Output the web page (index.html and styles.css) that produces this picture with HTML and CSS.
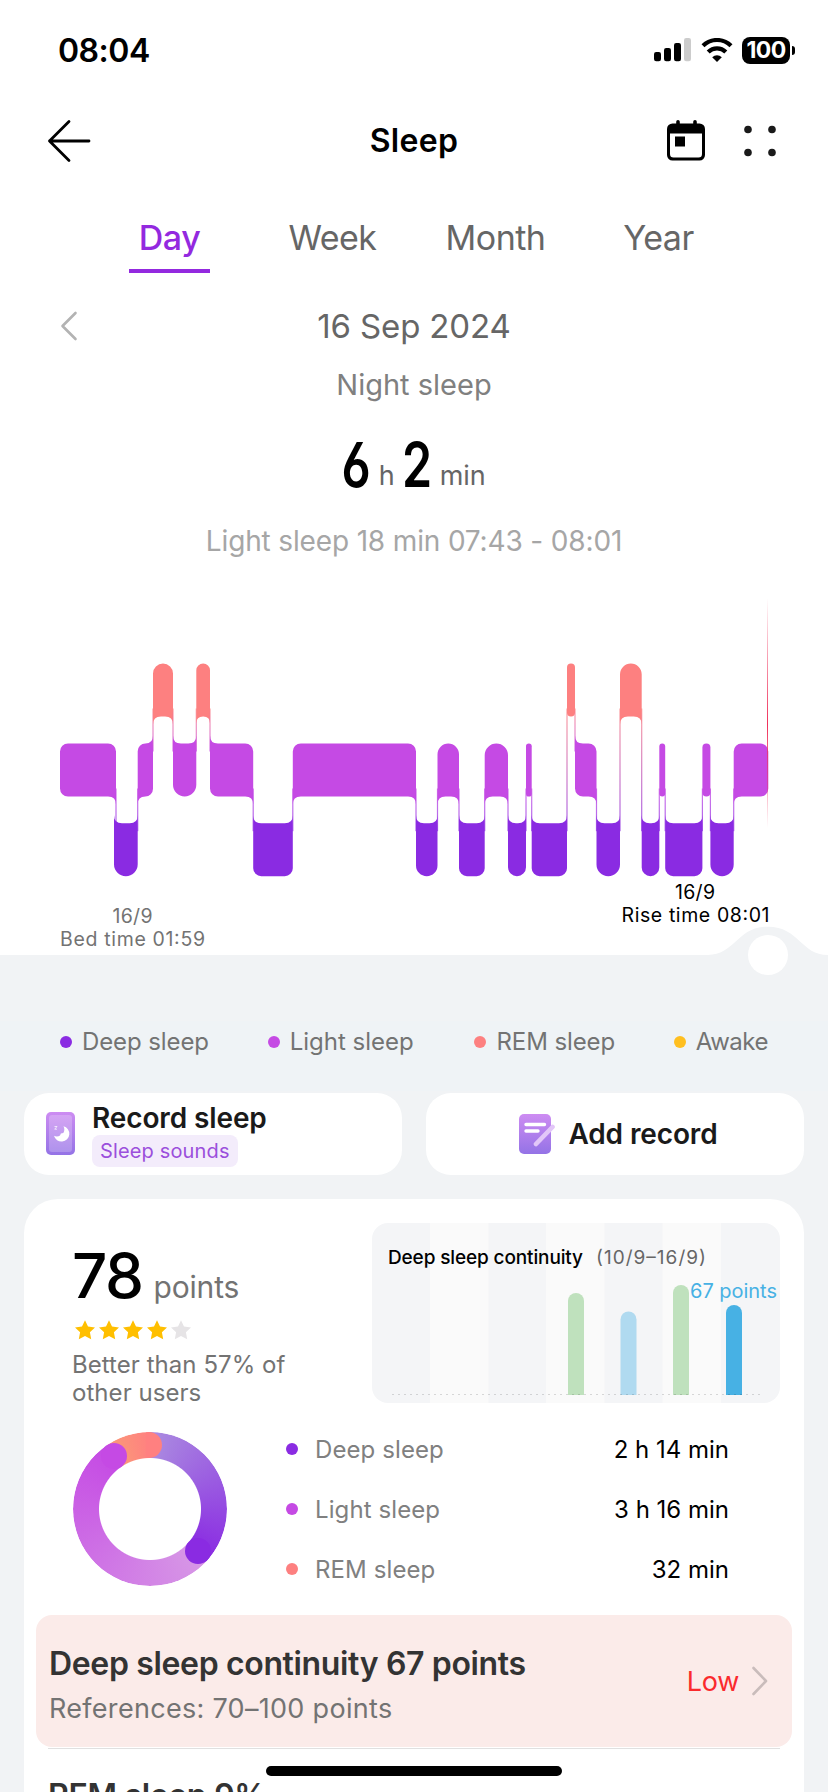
FILE: index.html
```html
<!DOCTYPE html>
<html lang="en">
<head>
<meta charset="utf-8">
<title>Sleep</title>
<link rel="stylesheet" href="styles.css">
</head>
<body>
<div class="screen">
  <header class="status">
    <span class="clock">08:04</span>
    <div class="indicators">
      <svg class="signal" width="38" height="24" viewBox="0 0 38 24">
        <rect x="0" y="14" width="7" height="9.3" rx="2.2"/><rect x="10" y="10" width="7" height="13.3" rx="2.2"/>
        <rect x="20" y="5" width="7" height="18.3" rx="2.2"/><rect x="30" y="0" width="7" height="23.3" rx="2.2" fill="#ccc"/>
      </svg>
      <svg class="wifi" width="32" height="24" viewBox="0 0 32 24">
        <path d="M2 7.8a19.8 19.8 0 0 1 28 0" fill="none" stroke="#000" stroke-width="4.2"/>
        <path d="M7.2 13.9a12.5 12.5 0 0 1 17.6 0" fill="none" stroke="#000" stroke-width="4.2"/>
        <path d="M11.2 19.2a7 7 0 0 1 9.6 0L16 24z"/>
      </svg>
      <div class="battery">100</div><i class="battery-cap"></i>
    </div>
  </header>

  <nav class="nav">
    <svg class="back" width="44" height="44" viewBox="0 0 44 44" fill="none" stroke="#000" stroke-width="2.8" stroke-linecap="round" stroke-linejoin="round"><path d="M22 2.500 2.500 22 22 41.500M2.500 22h39.500"/></svg>
    <h1 class="title">Sleep</h1>
    <div class="actions">
      <svg width="38" height="42" viewBox="0 0 38 42"><path d="M0 9a5.500 5.500 0 0 1 5.500-5.500h27A5.500 5.500 0 0 1 38 9v26a5.500 5.500 0 0 1-5.500 5.500h-27A5.500 5.500 0 0 1 0 35zM3 13.500V34a3.500 3.500 0 0 0 3.500 3.500h25A3.500 3.500 0 0 0 35 34V13.500z" fill-rule="evenodd"/><path d="M11 1.800V6M28 1.800V6" stroke="#000" stroke-width="3.600" stroke-linecap="round"/><rect x="8" y="16.500" width="10" height="10"/></svg>
      <svg width="32" height="32" viewBox="0 0 32 32" fill="#1a1a1a"><circle cx="4" cy="4.500" r="3.800"/><circle cx="28" cy="4.500" r="3.800"/><circle cx="4" cy="27.500" r="3.800"/><circle cx="28" cy="27.500" r="3.800"/></svg>
    </div>
  </nav>

  <div class="tabs">
    <span class="tab active">Day</span><span class="tab">Week</span><span class="tab">Month</span><span class="tab">Year</span>
  </div>

  <div class="date-row">
    <svg width="18" height="30" viewBox="0 0 18 30" fill="none" stroke="#b3b3b3" stroke-width="2.600" stroke-linecap="round" stroke-linejoin="round"><path d="M15.500 2 2.500 15l13 13"/></svg>
    <span class="date">16 Sep 2024</span>
  </div>
  <p class="kind">Night sleep</p>
  <p class="duration"><b class="num">6</b><span class="unit">h</span><b class="num">2</b><span class="unit">min</span></p>
  <p class="detail">Light sleep 18 min 07:43 - 08:01</p>

  <svg class="stages" width="828" height="460" viewBox="0 561 828 460">
    <path class="track" d="M0 955H708C735 955 737 926.700 768 926.700S801 955 828 955V1021H0Z"/>
    <circle cx="768" cy="955" r="20" fill="#fff"/>
    <defs>
      <linearGradient id="cursor" x1="0" y1="0" x2="0" y2="1"><stop offset="0" stop-color="#f0305a" stop-opacity="0"/><stop offset=".55" stop-color="#f0305a"/><stop offset="1" stop-color="#f0305a" stop-opacity="0"/></linearGradient>
    </defs>
    <g id="plot"></g>
    <rect x="767" y="598" width="1" height="230" fill="url(#cursor)"/>
    <g class="axis" text-anchor="middle">
      <text x="132.500" y="922.700" textLength="40">16/9</text>
      <text x="132.500" y="945.700" textLength="145">Bed time 01:59</text>
      <text class="strong" x="695" y="899" textLength="40">16/9</text>
      <text class="strong" x="695.500" y="922" textLength="148">Rise time 08:01</text>
    </g>
  </svg>

  <div class="legend">
    <span class="key deep">Deep sleep</span><span class="key light">Light sleep</span><span class="key rem">REM sleep</span><span class="key awake">Awake</span>
  </div>

  <div class="buttons">
    <div class="button">
      <svg class="phone" width="29" height="43" viewBox="0 0 29 43"><defs><linearGradient id="pg" x1="0" y1="0" x2="0" y2="1"><stop offset="0" stop-color="#cd8cf2"/><stop offset="1" stop-color="#9473e6"/></linearGradient></defs><rect width="29" height="43" rx="5" fill="url(#pg)"/><rect x="3" y="3" width="23" height="37" rx="3" fill="#fff" opacity=".22"/><path d="M17.500 14.200a7.800 7.800 0 1 1-9.500 9.600c2 1 4.500.8 6-.3l.9-2 2.400-.4c1.300-2 1.400-4.800.2-6.900z" fill="#fff"/><path d="M8.500 14.500l2.500 0-2.300 2.700h2.300" fill="none" stroke="#fff" stroke-opacity=".7"/></svg>
      <div class="record"><strong>Record sleep</strong><span class="tag">Sleep sounds</span></div>
    </div>
    <div class="button center">
      <svg width="36" height="41" viewBox="0 0 36 41"><rect width="32" height="40" rx="5" fill="url(#pg)"/><path d="M7 10.500h18.500M7 17h12" stroke="#fff" stroke-width="3.400" stroke-linecap="round"/><path d="M33.500 13 17 30" stroke="#e2c6f8" stroke-width="4.600" stroke-linecap="round"/></svg>
      <strong>Add record</strong>
    </div>
  </div>

  <section class="card">
    <div class="summary">
      <div class="score">
        <p class="points"><span class="big">78</span><span class="pt">points</span></p>
        <div class="stars" id="stars"></div>
        <p class="rank">Better than 57% of<br>other users</p>
      </div>
      <svg class="trend" width="408" height="180" viewBox="372 1223 408 180">
        <g fill="#fafafa"><rect x="430" y="1223" width="58.500" height="180"/><rect x="546" y="1223" width="58.500" height="180"/><rect x="662.500" y="1223" width="58.500" height="180"/></g>
        <g><path d="M568 1395v-94a8 8 0 0 1 16 0v94z" fill="#bfe1bd"/><path d="M620.500 1395v-75.500a8 8 0 0 1 16 0v75.500z" fill="#b0daf0"/><path d="M673 1395v-102a8 8 0 0 1 16 0v102z" fill="#bfe1bd"/><path d="M726 1395v-82a8 8 0 0 1 16 0v82z" fill="#47b1e4"/></g>
        <path d="M392 1394.500H760" stroke="#000" stroke-opacity=".14" stroke-dasharray="2 4"/>
        <text class="t1" x="388" y="1264" textLength="195">Deep sleep continuity</text>
        <text class="t2" x="596" y="1263.500" textLength="110">(10/9–16/9)</text>
        <text class="t3" x="690" y="1298" textLength="87">67 points</text>
      </svg>
    </div>
    <div class="breakdown">
      <div class="donut"><div class="ring"></div><i class="cap c1"></i><i class="cap c2"></i><i class="cap c3"></i></div>
      <div class="rows">
        <div class="row"><span class="key deep">Deep sleep</span><span>2 h 14 min</span></div>
        <div class="row"><span class="key light">Light sleep</span><span>3 h 16 min</span></div>
        <div class="row"><span class="key rem">REM sleep</span><span>32 min</span></div>
      </div>
    </div>
    <div class="alert">
      <div><h2 class="metric">Deep sleep continuity 67 points</h2><p class="refs">References: 70–100 points</p></div>
      <div class="level">Low<svg width="16" height="30" viewBox="0 0 16 30" fill="none" stroke="#c9bcbb" stroke-width="2.600" stroke-linecap="round" stroke-linejoin="round"><path d="m1.500 2 12.500 13L1.500 28"/></svg></div>
    </div>
    <div class="next"><h2 class="metric">REM sleep 9%</h2></div>
  </section>
  <div class="home"></div>
</div>
<script src="chart.js"></script>
</body>
</html>
```
FILE: styles.css
```css
* { box-sizing: border-box; margin: 0; padding: 0; }
body { background: #f1f3f5; font-family: Inter, "Liberation Sans", sans-serif; color: #000; }
.screen { position: relative; width: 828px; height: 1792px; overflow: hidden; background: linear-gradient(#fff 955px, #f1f3f5 955px); }
svg { display: block; flex: none; }

.status { height: 100px; padding: 0 33px 0 58px; display: flex; align-items: center; justify-content: space-between; }
.clock { font-size: 32px; font-weight: 600; letter-spacing: -.5px; }
.indicators { display: flex; align-items: center; }
.wifi { margin-left: 9px; }
.battery { margin-left: 9px; width: 48px; height: 27px; border-radius: 8px; background: #000; color: #fff; font-size: 23px; font-weight: 700; line-height: 27px; text-align: center; letter-spacing: -.6px; }
.battery-cap { width: 3px; height: 9px; margin-left: 2px; border-radius: 0 3px 3px 0; background: #000; }

.nav { height: 82px; padding: 0 52px; display: grid; grid-template-columns: 1fr auto 1fr; align-items: center; }
.back { margin-left: -5px; }
.title { font-size: 32px; font-weight: 600; letter-spacing: .3px; line-height: 38px; }
.actions { display: flex; justify-content: flex-end; align-items: center; gap: 39px; }

.tabs { height: 91px; padding: 26px 88px 0; display: grid; grid-template-columns: repeat(4, 163px); }
.tab { justify-self: center; width: 163px; text-align: center; line-height: 60px; font-size: 34px; letter-spacing: -.5px; color: #666; }
.tab.active { width: 81px; height: 65px; color: #9329df; border-bottom: 4px solid #9329df; font-weight: 500; }

.date-row { position: relative; margin-top: 23px; height: 60px; padding-left: 60px; display: flex; align-items: center; }
.date { flex: 1; padding-right: 78px; text-align: center; font-size: 33px; letter-spacing: -.15px; color: #666; }
.kind { margin-top: 9px; line-height: 40px; text-align: center; font-size: 29px; color: #808080; }
.duration { margin-top: 20px; height: 80px; line-height: 80px; display: flex; justify-content: center; }
.num { width: 28px; font-size: 62px; font-weight: 600; font-feature-settings: "cv03"; transform: scaleX(.78); display: flex; justify-content: center; }
.unit { font-size: 27px; color: #666; line-height: 101px; margin: 0 8.5px; }
.unit:last-child { margin-right: 0; }
.detail { margin-top: 16px; line-height: 40px; text-align: center; font-size: 28px; letter-spacing: -.15px; color: #a6a6a6; }

.track { fill: #f1f3f5; }
.axis { font-size: 19.5px; fill: #737373; }
.axis .strong { fill: #000; }

.legend { height: 70px; padding: 6px 60px 0 60px; background: #eff3f6; display: flex; align-items: flex-start; justify-content: space-between; font-size: 24px; line-height: 30px; color: #737373; }
.key { display: flex; align-items: center; gap: 10px; }
.key::before { content: ""; width: 12px; height: 12px; border-radius: 50%; background: currentColor; }
.key.deep::before { background: #8a2be2; }
.key.light::before { background: #c54ae4; }
.key.rem::before { background: #fd8080; }
.key.awake::before { background: #ffbf20; }
.legend .deep { letter-spacing: -.1px; }
.legend .rem { letter-spacing: -.1px; margin-left: 2px; }
.legend .awake { letter-spacing: -.5px; }

.buttons { margin: 2px 24px 0; display: grid; grid-template-columns: 1fr 1fr; gap: 24px; }
.button { height: 82px; border-radius: 25px; background: #fff; display: flex; align-items: center; padding: 0 22px; gap: 17px; font-size: 28px; color: #1a1a1a; }
.button.center { justify-content: center; gap: 13px; padding: 0 15px 0 22px; }
.button strong { font-weight: 600; line-height: 34px; letter-spacing: -.12px; }
.phone { margin-top: -1px; }
.record { display: flex; flex-direction: column; align-items: flex-start; }
.tag { padding: 0 8px; border-radius: 8px; background: #f3ecfb; color: #9b4fdc; font-size: 20px; line-height: 32px; letter-spacing: .15px; }

.card { margin: 24px 24px 0; height: 700px; border-radius: 34px; background: #fff; padding: 24px 12px 0; }
.summary { height: 180px; display: flex; justify-content: space-between; padding: 0 12px 0 36px; }
.points { margin-top: 18px; height: 70px; display: flex; align-items: baseline; line-height: 70px; }
.big { font-size: 62px; font-weight: 500; letter-spacing: -1.5px; }
.pt { margin-left: 11px; font-size: 30px; letter-spacing: -.2px; color: #737373; }
.stars { display: flex; gap: 4px; margin: 9px 0 0 3px; height: 20px; }
.rank { margin-top: 11px; font-size: 24px; line-height: 28px; letter-spacing: .05px; color: #737373; }
.trend { border-radius: 16px; background: #f4f5f7; }
.t1 { font-size: 19px; font-weight: 500; fill: #000; }
.t2 { font-size: 19px; fill: #666; }
.t3 { font-size: 20px; fill: #47b1e4; }

.breakdown { margin-top: 16px; height: 196px; display: flex; padding: 0 63px 0 37px; }
.donut { position: relative; margin-top: 13px; width: 154px; height: 154px; }
.ring { width: 154px; height: 154px; border-radius: 50%; background: conic-gradient(#ab8ce0, #8a2be2 131deg, #8a2be2 133deg, #d798e6 133deg, #c54ae4 326deg, #fa9a78 327deg, #ff8080 360deg); -webkit-mask: radial-gradient(circle, transparent 50.5px, #000 51.5px); mask: radial-gradient(circle, transparent 50.5px, #000 51.5px); }
.cap { position: absolute; width: 26px; height: 26px; border-radius: 50%; }
.c1 { left: 112.300px; top: 105.700px; background: #8a2be2; }
.c2 { left: 28px; top: 11px; background: #c54ae4; }
.c3 { left: 62.700px; top: 0; background: linear-gradient(90deg, transparent 40%, #ff8080 40%); }
.rows { flex: 1; margin-left: 59px; }
.row { height: 60px; display: flex; align-items: center; justify-content: space-between; font-size: 24px; }
.row .key { color: #808080; gap: 17px; letter-spacing: .1px; }

.alert { height: 132px; border-radius: 16px; background: #fbebe9; padding: 27px 24px 0 13px; display: flex; justify-content: space-between; }
.metric { font-size: 32px; line-height: 44px; font-weight: 600; letter-spacing: -.35px; color: #333; }
.refs { font-size: 27px; line-height: 46px; letter-spacing: .3px; color: #737373; }
.level { height: 78px; display: flex; align-items: center; gap: 13px; font-size: 27px; letter-spacing: -.3px; color: #fa2a2d; }
.next { margin: 1px 12px 0; border-top: 1px solid #e0e0e0; padding-top: 25px; }
.home { position: absolute; left: 266px; top: 1766px; width: 296px; height: 10px; border-radius: 5px; background: #000; }
```
FILE: chart.js
```js
const levels = {
  R: { y: 663.5, color: '#fd8080' },
  L: { y: 743.5, color: '#c54ae4' },
  D: { y: 823.2, color: '#8a2be2' }
};
const H = 53;
// [stage, start, end] along the night
const night = [
  ['L', 60, 116], ['D', 114, 137.7], ['L', 137.7, 153], ['R', 153, 173], ['L', 173, 196.3], ['R', 196.3, 210],
  ['L', 210, 253.2], ['D', 253.2, 292.8], ['L', 292.8, 416], ['D', 416, 437.5], ['L', 437.5, 459], ['D', 459, 484.7],
  ['L', 484.7, 508], ['D', 508, 526], ['L', 526, 531.7], ['D', 531.7, 567], ['R', 567, 575], ['L', 575, 596.5],
  ['D', 596.5, 620], ['R', 620, 641.7], ['D', 641.7, 659.3], ['L', 659.3, 665.2], ['D', 665.2, 702.4],
  ['L', 702.4, 710.4], ['D', 710.4, 733.7], ['L', 733.7, 768.3]
];
let defs = '', out = '';
night.forEach(([s, a, b], i) => {
  const { y, color } = levels[s], w = b - a, e = y + H;
  const big = w < 25 ? w / 2 : 8, f = Math.min(8, w / 2), slim = w < 9;
  const dir = n => n ? Math.sign(levels[n[0]].y - y) : 0;
  const l = dir(night[i - 1]), r = dir(night[i + 1]);
  const rad = (side, edge) => !slim && side === edge ? 0 : (l === r || slim ? big : f);
  const tl = rad(l, -1), tr = rad(r, -1), br = rad(r, 1), bl = rad(l, 1);
  let d = `M${a + tl} ${y}H${b - tr}a${tr} ${tr} 0 0 1 ${tr} ${tr}V${e - br}a${br} ${br} 0 0 1 ${-br} ${br}H${a + bl}a${bl} ${bl} 0 0 1 ${-bl} ${-bl}V${y + tl}a${tl} ${tl} 0 0 1 ${tl} ${-tl}Z`;
  if (!slim) {
    [[l, a, 1], [r, b, -1]].forEach(([side, x, k]) => {
      if (!side) return;
      const edge = side < 0 ? y : e, v = side * f;
      d += `M${x} ${edge}V${edge + v}Q${x} ${edge} ${x + k * f} ${edge}Z`;
    });
  }
  out += `<path d="${d}" fill="${color}"/>`;
  const n = night[i + 1];
  if (n) {
    const [up, lo] = levels[n[0]].y > y ? [s, n[0]] : [n[0], s];
    defs += `<linearGradient id="g${up}${lo}" x1="0" y1="0" x2="0" y2="1"><stop offset="0" stop-color="${levels[up].color}"/><stop offset="1" stop-color="${levels[lo].color}"/></linearGradient>`;
    const t = levels[up].y + H - 8, h = levels[lo].y + 8 - t;
    out += `<rect x="${b - .6}" y="${t}" width="1.2" height="${h}" fill="url(#g${up}${lo})" opacity=".75"/>`;
  }
});
document.getElementById('plot').innerHTML = `<defs>${defs}</defs>${out}`;

document.getElementById('stars').innerHTML = [1, 2, 3, 4, 5].map(n =>
  `<svg width="20" height="20" viewBox="0 0 20 20"><path d="M10 .3l3 6.300 7 .9-5.100 4.800 1.300 6.900L10 15.900l-6.200 3.300 1.300-6.900L0 7.500l7-.9z" fill="${n < 5 ? '#ffbf00' : '#e6e4e6'}"/></svg>`).join('');
```
